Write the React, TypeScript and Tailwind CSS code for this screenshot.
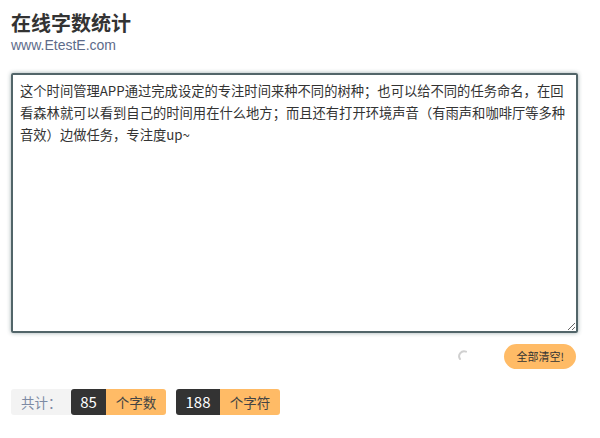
import React from "react";

const text =
  "这个时间管理APP通过完成设定的专注时间来种不同的树种；也可以给不同的任务命名，在回\n看森林就可以看到自己的时间用在什么地方；而且还有打开环境声音（有雨声和咖啡厅等多种\n音效）边做任务，专注度up~";

export default function App() {
  return (
    <div
      className="w-[600px] h-[438px] bg-white text-[#333] overflow-hidden"
      style={{ fontFamily: '"Microsoft YaHei", "Noto Sans CJK SC", "Noto Sans", sans-serif' }}
    >
      <div className="pl-[11px] pt-[9px]">
        <h1 className="text-[20px] font-bold leading-[28px] text-[#333]">在线字数统计</h1>
        <div
          className="text-[14px] leading-[16px] text-[#5d6b8a]"
          style={{ fontFamily: '"Liberation Sans", Arial, sans-serif' }}
        >
          www.EtestE.com
        </div>
      </div>
      <div className="px-[11px] mt-[20px] w-[589px]">
        <textarea
          wrap="off"
          readOnly
          value={text}
          className="block w-[567px] h-[260px] border-2 border-[#526569] rounded-[2px] shadow-[0_0_4px_rgba(40,70,75,0.45)] px-[7px] py-[5px] text-[13.3px] leading-[22px] text-[#333] outline-none resize-y overflow-hidden"
          style={{ fontFamily: '"Microsoft YaHei", "Noto Sans CJK SC", sans-serif' }}
        />
      </div>
      <div className="flex items-center justify-end pr-[24px] mt-[10px] h-[26px]">
        <svg width="12" height="12" viewBox="0 0 12 12" className="mr-[34px]">
          <path d="M2 9 A5 5 0 0 1 8 1.6" fill="none" stroke="#d0d0d0" strokeWidth="2" strokeLinecap="round" />
        </svg>
        <button className="h-[25px] px-[12px] rounded-full bg-[#ffbb66] text-[11px] text-[#333]">
          全部清空!
        </button>
      </div>
      <div className="flex items-center pl-[11px] mt-[20px] text-[13.5px] h-[26px]">
        <div className="h-[26px] w-[60px] flex items-center pl-[10px] bg-[#f3f3f3] rounded-l-[3px] text-[#7d8aa3]">
          共计：
        </div>
        <div className="h-[26px] w-[35px] flex items-center justify-center bg-[#333333] text-white text-[15px] rounded-l-[3px]">
          85
        </div>
        <div className="h-[26px] w-[60px] flex items-center justify-center bg-[#ffbb66] text-[#444] rounded-r-[3px]">
          个字数
        </div>
        <div className="h-[26px] w-[44px] ml-[10px] flex items-center justify-center bg-[#333333] text-white text-[15px] rounded-l-[3px]">
          188
        </div>
        <div className="h-[26px] w-[60px] flex items-center justify-center bg-[#ffbb66] text-[#444] rounded-r-[3px]">
          个字符
        </div>
      </div>
    </div>
  );
}
